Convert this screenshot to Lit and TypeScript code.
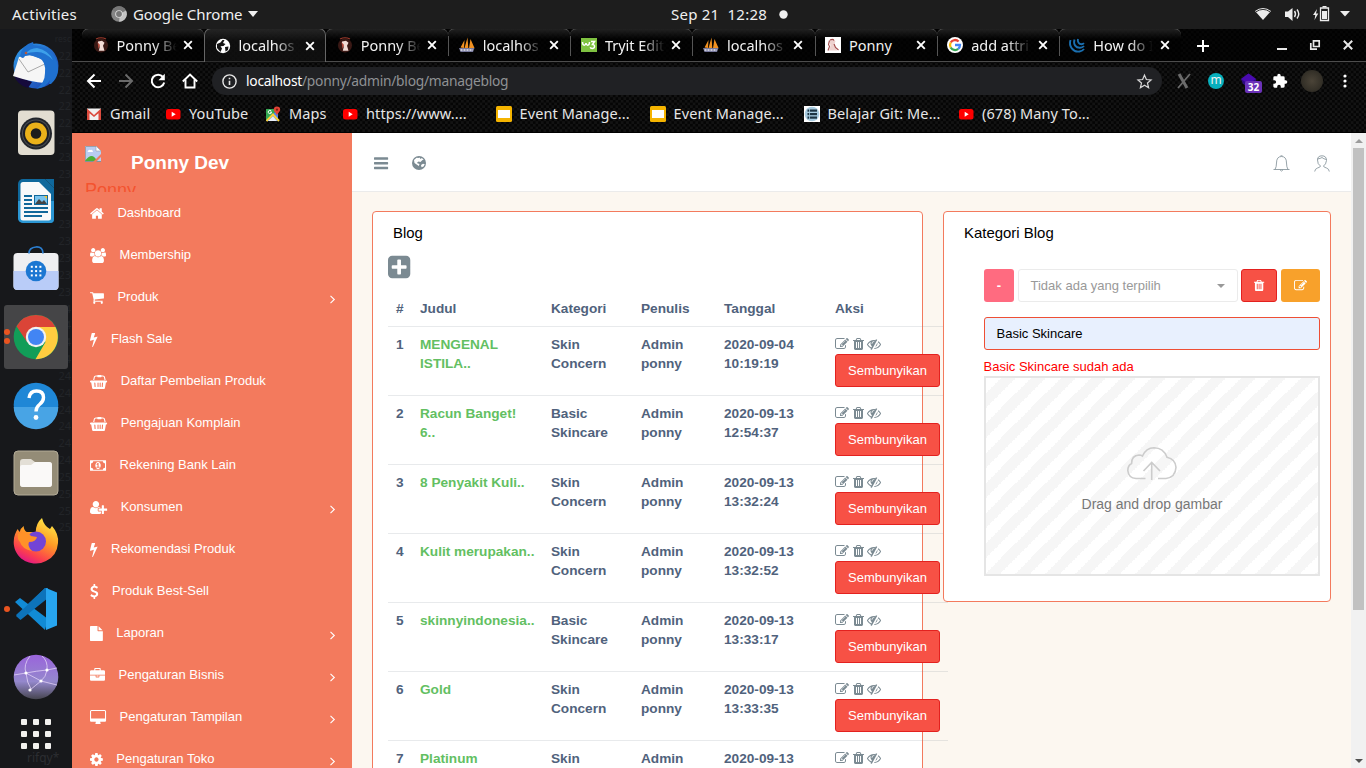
import { LitElement, html, css, svg, nothing } from "lit";

type Glyph = { w: number; d: string };

// Icon outlines on a 1792-unit square, centred horizontally; w is the advance width.
const GLYPHS: Record<string, Glyph> = {
  home: { w: 1664, d: "M1472 992v480q0 26-19 45t-45 19h-384v-384h-256v384h-384q-26 0-45-19t-19-45v-480q0-1 .5-3t.5-3l575-474 575 474q1 2 1 6zm223-69l-62 74q-8 9-21 11h-3q-13 0-21-7l-692-577-692 577q-12 8-24 7-13-2-21-11l-62-74q-8-10-7-23.5t11-21.5l719-599q32-26 76-26t76 26l244 204v-195q0-14 9-23t23-9h192q14 0 23 9t9 23v408l219 182q10 8 11 21.5t-7 23.5z" },
  cart: { w: 1664, d: "M704 1536q0 52-38 90t-90 38-90-38-38-90 38-90 90-38 90 38 38 90zm896 0q0 52-38 90t-90 38-90-38-38-90 38-90 90-38 90 38 38 90zm128-1088v512q0 24-16.5 42.5t-40.5 21.5l-1044 122q13 60 13 70 0 16-24 64h920q26 0 45 19t19 45-19 45-45 19h-1024q-26 0-45-19t-19-45q0-11 8-31.5t16-36 21.5-40 15.5-29.5l-177-823h-204q-26 0-45-19t-19-45 19-45 45-19h256q16 0 28.5 6.5t19.5 15.5 13 24.5 8 26 5.5 29.5 4.5 26h1201q26 0 45 19t19 45z" },
  bolt: { w: 896, d: "M1333 566q18 20 7 44l-540 1157q-13 25-42 25-4 0-14-2-17-5-25.5-19t-4.5-30l197-808-406 101q-4 1-12 1-18 0-31-11-18-15-13-39l201-825q4-14 16-23t28-9h328q19 0 32 12.5t13 29.5q0 8-5 18l-171 463 396-98q8-2 12-2 19 0 34 15z" },
  group: { w: 1920, d: "M529 896q-162 5-265 128h-134q-82 0-138-40.5t-56-118.5q0-353 124-353 6 0 43.5 21t97.5 42.5 119 21.5q67 0 133-23-5 37-5 66 0 139 81 256zm1071 637q0 120-73 189.5t-194 69.5h-874q-121 0-194-69.5t-73-189.5q0-53 3.500-103.500t14-109 26.500-108.500 43-97.500 62-81 85.500-53.500 111.500-20q10 0 43 21.500t73 48 107 48 135 21.500 135-21.500 107-48 73-48 43-21.500q61 0 111.500 20t85.500 53.500 62 81 43 97.500 26.500 108.500 14 109 3.500 103.500zm-1024-1277q0 106-75 181t-181 75-181-75-75-181 75-181 181-75 181 75 75 181zm704 384q0 159-112.500 271.500t-271.500 112.500-271.500-112.500-112.500-271.500 112.500-271.500 271.500-112.500 271.500 112.500 112.500 271.500zm576 225q0 78-56 118.500t-138 40.500h-134q-103-123-265-128 81-117 81-256 0-29-5-66 66 23 133 23 59 0 119-21.500t97.500-42.500 43.500-21q124 0 124 353zm-128-609q0 106-75 181t-181 75-181-75-75-181 75-181 181-75 181 75 75 181z" },
  basket: { w: 2048, d: "M1792 768q53 0 90.500 37.500t37.500 90.500-37.500 90.500-90.500 37.500h-15l-115 662q-8 46-44 76t-82 30h-1280q-46 0-82-30t-44-76l-115-662h-15q-53 0-90.500-37.500t-37.500-90.500 37.500-90.500 90.500-37.500h1792zm-1307 800q26-2 43.500-22.500t15.500-46.500l-32-416q-2-26-22.500-43.500t-46.500-15.500-43.500 22.500-15.500 46.500l32 416q2 25 20.500 42t43.500 17h5zm411-64v-416q0-26-19-45t-45-19-45 19-19 45v416q0 26 19 45t45 19 45-19 19-45zm256 0v-416q0-26-19-45t-45-19-45 19-19 45v416q0 26 19 45t45 19 45-19 19-45zm248 5l32-416q2-26-15.500-46.500t-43.500-22.500-46.500 15.500-22.500 43.500l-32 416q-2 26 15.500 46.500t43.500 22.500h5q25 0 43.500-17t20.500-42zm-952-1098l-93 412h-132l101-441q19-88 89-143.500t160-55.500h167q0-26 19-45t45-19h384q26 0 45 19t19 45h167q90 0 160 55.500t89 143.500l101 441h-132l-93-412q-11-44-45.500-72t-79.500-28h-167q0 26-19 45t-45 19h-384q-26 0-45-19t-19-45h-167q-45 0-79.500 28t-45.500 72z" },
  money: { w: 1920, d: "M704 1152h384v-96h-128v-448h-114l-148 137 77 80q42-37 55-57h2v288h-128v96zm512-256q0 70-21 142t-59.500 134-101.500 101-138 39-138-39-101.500-101-59.500-134-21-142 21-142 59.500-134 101.500-101 138-39 138 39 101.500 101 59.500 134 21 142zm512 256v-512q-106 0-181-75t-75-181h-1152q0 106-75 181t-181 75v512q106 0 181 75t75 181h1152q0-106 75-181t181-75zm128-832v1152q0 26-19 45t-45 19h-1792q-26 0-45-19t-19-45v-1152q0-26 19-45t45-19h1792q26 0 45 19t19 45z" },
  userplus: { w: 2048, d: "M576 896q-159 0-271.500-112.500t-112.500-271.500 112.500-271.500 271.500-112.500 271.500 112.500 112.500 271.500-112.500 271.500-271.500 112.500zm960 128h352q13 0 22.500 9.500t9.500 22.500v192q0 13-9.500 22.500t-22.500 9.500h-352v352q0 13-9.500 22.500t-22.500 9.500h-192q-13 0-22.500-9.500t-9.500-22.500v-352h-352q-13 0-22.500-9.500t-9.500-22.500v-192q0-13 9.500-22.500t22.500-9.500h352v-352q0-13 9.500-22.500t22.500-9.500h192q13 0 22.500 9.500t9.500 22.500v352zm-736 224q0 52 38 90t90 38h256v238q-68 50-171 50h-874q-121 0-194-69t-73-190q0-53 3.500-103.500t14-109 26.500-108.500 43-97.500 62-81 85.500-53.500 111.500-20q19 0 39 17 79 61 154.500 91.500t164.500 30.500 164.500-30.500 154.500-91.500q20-17 39-17 132 0 217 96h-223q-52 0-90 38t-38 90v192z" },
  dollar: { w: 1024, d: "M1362 1185q0 153-99.500 263.500t-258.500 136.500v175q0 14-9 23t-23 9h-135q-13 0-22.500-9.500t-9.500-22.500v-175q-66-9-127.500-31t-101.500-44.500-74-48-46.500-37.500-17.500-18q-17-21-2-41l103-135q7-10 23-12 15-2 24 9l2 2q113 99 243 125 37 8 74 8 81 0 142.500-43t61.500-122q0-28-15-53t-33.500-42-58.500-37.500-66-32-80-32.500q-39-16-61.500-25t-61.500-26.500-62.500-31-56.500-35.500-53.500-42.500-43.500-49-35.500-58-21-66.500-8.500-78q0-138 98-242t255-134v-180q0-13 9.500-22.500t22.500-9.500h135q14 0 23 9t9 23v176q57 6 110.500 23t87 33.500 63.500 37.500 39 29 15 14q17 18 5 38l-81 146q-8 15-23 16-14 3-27-7-3-3-14.500-12t-39-26.500-58.500-32-74.500-26-85.500-11.500q-95 0-155 43t-60 111q0 26 8.500 48t29.500 41.500 39.500 33 56 31 60.500 27 70 27.500q53 20 81 31.500t76 35 75.500 42.500 62 50 53 63.500 31.500 76.500 13 94z" },
  file: { w: 1536, d: "M1152 512v-472q22 14 36 28l408 408q14 14 28 36h-472zm-128 32q0 40 28 68t68 28h544v1056q0 40-28 68t-68 28h-1344q-40 0-68-28t-28-68v-1600q0-40 28-68t68-28h800v544z" },
  briefcase: { w: 1792, d: "M640 256h512v-128h-512v128zm1152 640v480q0 66-47 113t-113 47h-1472q-66 0-113-47t-47-113v-480h672v160q0 26 19 45t45 19h320q26 0 45-19t19-45v-160h672zm-768 0v128h-256v-128h256zm768-480v384h-1792v-384q0-66 47-113t113-47h352v-160q0-40 28-68t68-28h576q40 0 68 28t28 68v160h352q66 0 113 47t47 113z" },
  desktop: { w: 1920, d: "M1728 992v-832q0-13-9.500-22.500t-22.500-9.500h-1600q-13 0-22.500 9.500t-9.500 22.500v832q0 13 9.500 22.500t22.500 9.500h1600q13 0 22.500-9.500t9.500-22.500zm128-832v1088q0 66-47 113t-113 47h-544q0 37 16 77.500t32 71 16 43.500q0 26-19 45t-45 19h-512q-26 0-45-19t-19-45q0-14 16-44t32-70 16-78h-544q-66 0-113-47t-47-113v-1088q0-66 47-113t113-47h1600q66 0 113 47t47 113z" },
  gear: { w: 1536, d: "M1152 896q0-106-75-181t-181-75-181 75-75 181 75 181 181 75 181-75 75-181zm512-109v222q0 12-8 23t-20 13l-185 28q-19 54-39 91 35 50 107 138 10 12 10 25t-9 23q-27 37-99 108t-94 71q-12 0-26-9l-138-108q-44 23-91 38-16 136-29 186-7 28-36 28h-222q-14 0-24.5-8.5t-11.5-21.5l-28-184q-49-16-90-37l-141 107q-10 9-25 9-14 0-25-11-126-114-165-168-7-10-7-23 0-12 8-23 15-21 51-66.5t54-70.5q-27-50-41-99l-183-27q-13-2-21-12.5t-8-23.5v-222q0-12 8-23t19-13l186-28q14-46 39-92-40-57-107-138-10-12-10-24 0-10 9-23 26-36 98.5-107.5t94.5-71.5q13 0 26 10l138 107q44-23 91-38 16-136 29-186 7-28 36-28h222q14 0 24.5 8.5t11.5 21.5l28 184q49 16 90 37l142-107q9-9 24-9 13 0 25 10 129 119 165 170 7 8 7 22 0 12-8 23-15 21-51 66.5t-54 70.5q26 50 41 98l183 28q13 2 21 12.5t8 23.5z" },
  bars: { w: 1536, d: "M1664 1344v128q0 26-19 45t-45 19h-1408q-26 0-45-19t-19-45v-128q0-26 19-45t45-19h1408q26 0 45 19t19 45zm0-512v128q0 26-19 45t-45 19h-1408q-26 0-45-19t-19-45v-128q0-26 19-45t45-19h1408q26 0 45 19t19 45zm0-512v128q0 26-19 45t-45 19h-1408q-26 0-45-19t-19-45v-128q0-26 19-45t45-19h1408q26 0 45 19t19 45z" },
  plus: { w: 1536, d: "M1408 960v-128q0-26-19-45t-45-19h-320v-320q0-26-19-45t-45-19h-128q-26 0-45 19t-19 45v320h-320q-26 0-45 19t-19 45v128q0 26 19 45t45 19h320v320q0 26 19 45t45 19h128q26 0 45-19t19-45v-320h320q26 0 45-19t19-45zm256-544v960q0 119-84.5 203.5t-203.5 84.5h-960q-119 0-203.5-84.5t-84.5-203.5v-960q0-119 84.5-203.5t203.5-84.5h960q119 0 203.5 84.5t84.5 203.5z" },
  edit: { w: 1792, d: "M888 1184l116-116-152-152-116 116v56h96v96h56zm440-720q-16-16-33 1l-350 350q-17 17-1 33t33-1l350-350q17-17 1-33zm80 594v190q0 119-84.5 203.5t-203.5 84.5h-832q-119 0-203.5-84.5t-84.5-203.5v-832q0-119 84.5-203.5t203.5-84.5h832q63 0 117 25 15 7 18 23 3 17-9 29l-49 49q-14 14-32 8-23-6-45-6h-832q-66 0-113 47t-47 113v832q0 66 47 113t113 47h832q66 0 113-47t47-113v-126q0-13 9-22l64-64q15-15 35-7t20 29zm-96-738l288 288-672 672h-288v-288zm444 132l-92 92-288-288 92-92q28-28 68-28t68 28l152 152q28 28 28 68t-28 68z" },
  trash: { w: 1408, d: "M704 1376v-704q0-14-9-23t-23-9h-64q-14 0-23 9t-9 23v704q0 14 9 23t23 9h64q14 0 23-9t9-23zm256 0v-704q0-14-9-23t-23-9h-64q-14 0-23 9t-9 23v704q0 14 9 23t23 9h64q14 0 23-9t9-23zm256 0v-704q0-14-9-23t-23-9h-64q-14 0-23 9t-9 23v704q0 14 9 23t23 9h64q14 0 23-9t9-23zm-544-992h448l-48-117q-7-9-17-11h-317q-10 2-17 11zm928 32v64q0 14-9 23t-23 9h-96v948q0 83-47 143.5t-113 60.5h-832q-66 0-113-58.5t-47-141.5v-952h-96q-14 0-23-9t-9-23v-64q0-14 9-23t23-9h309l70-167q15-37 54-63t79-26h320q40 0 79 26t54 63l70 167h309q14 0 23 9t9 23z" },
  eyeslash: { w: 1792, d: "M555 1335l78-141q-87-63-136-159t-49-203q0-121 61-225-229 117-381 353 167 258 427 375zm389-759q0-20-14-34t-34-14q-125 0-214.500 89.500t-89.500 214.500q0 20 14 34t34 14 34-14 14-34q0-86 61-147t147-61q20 0 34-14t14-34zm363-191q0 7-1 9-106 189-316 567t-315 566l-49 89q-10 16-28 16-12 0-134-70-16-10-16-28 0-12 44-87-143-65-263.500-173t-208.500-245q-20-31-20-69t20-69q153-235 380-371t496-136q89 0 180 17l54-97q10-16 28-16 5 0 18 6t31 15.500 33 18.500 31.500 18.500 19.500 11.500q16 10 16 27zm37 447q0 139-79 253.500t-209 164.500l280-502q8 45 8 84zm448 128q0 35-20 69-39 64-109 145-150 172-347.500 267t-419.500 95l74-132q212-18 392.500-137t301.500-307q-115-179-282-294l63-112q95 64 182.500 153t144.500 184q20 34 20 69z" },
};

const fa = (name: string, size: number) => {
  const g = GLYPHS[name];
  const w = (g.w / 1792) * size;
  return html`<svg class="fa" width=${w.toFixed(2)} height=${size} viewBox="${(1792 - g.w) / 2} 0 ${g.w} 1792"><path fill="currentColor" fill-rule="evenodd" d=${g.d}/></svg>`;
};

const closeX = html`<svg class="x" width="10" height="10" viewBox="0 0 10 10"><path d="M1.200 1.200l7.600 7.600M8.800 1.200L1.200 8.800" stroke="#fff" stroke-width="1.900" fill="none"/></svg>`;

const FAV: Record<string, unknown> = {
  pony: svg`<circle cx="8" cy="8.500" r="7" fill="#3a1915"/><path d="M3 2q5-2.500 10 0" stroke="#9c3a2c" stroke-width="1.200" fill="none"/><path d="M5 4.500l4-.8 2.500 2-1.500 3 1.500 5H5.800l1-4L5 8z" fill="#f2dcd6"/><path d="M4.500 5l1 7 1.500-4z" fill="#b54a3c"/>`,
  earth: svg`<circle cx="8" cy="8" r="7.200" fill="#fff"/><path d="M2 6l3.500-1.500 2-2.500h2L8 5l2.500 1-2 2-3 .3L7 10.500 5.500 14 2 10zM10 9l3.500-.5L13 12l-2.500 1.500z" fill="#151515"/>`,
  pma: svg`<path d="M1.500 10.500L5.500 3 5 11zM5.500 11L8.500.5l.8 10.500zM10 11l1.500-9 4 9z" fill="#f19121"/><path d="M0 11h15.500l-1.500 4H1.500z" fill="#77799c"/><path d="M1.500 13h12.500" stroke="#e6e6ef" stroke-width="1.600" stroke-dasharray="2 1"/>`,
  w3: svg`<rect y="1" width="16" height="14" fill="#7fc241"/><path d="M1.500 5c0 4 3 4 3.500 1 .5 3 3.500 3 3.500-1M10 4.500h3.500L11.500 7.500c3 0 2.500 4-.3 4-1 0-1.800-.5-2-1.200" fill="none" stroke="#fff" stroke-width="1.500"/>`,
  ponyw: svg`<rect width="16" height="16" fill="#fff"/><path d="M4.500 3l4-.8 2 2-1 2.500 2.500 6.800H4l1.500-4.500z" fill="#eed2cf"/><path d="M4.500 3.500l-1 4 1 2-1.500 4M5 3q3-1.500 4 .5M9 7l1.500 3.500 3 2.500" fill="none" stroke="#a24a4a" stroke-width="1.100"/>`,
  google: svg`<circle cx="8" cy="8" r="8" fill="#fff"/><g fill="none" stroke-width="2.300"><path d="M11.600 4.500A5 5 0 0 0 3.700 5.500" stroke="#ea4335"/><path d="M3.700 5.500a5 5 0 0 0 0 5" stroke="#fbbc05"/><path d="M3.700 10.500a5 5 0 0 0 7.500 1.400" stroke="#34a853"/><path d="M11.200 11.900A5 5 0 0 0 13 8H8" stroke="#4285f4"/></g>`,
  jquery: svg`<g fill="none" stroke="#1a6fb0" stroke-width="1.900"><path d="M1.500 3C-.5 9 4 15.500 10.500 14.500q3-.5 4.500-2.500"/><path d="M5.500 2.500C4 7.500 7 11 11 10.800q2.500 0 4-1.800"/><path d="M9 2c-.8 3 1 5.200 3.500 5.200q1.500 0 2.500-1"/></g>`,
  gmail: svg`<rect x="1" y="2.500" width="14" height="11.500" fill="#f1f1f1"/><path d="M1 14V2.500L8 9l7-6.500V14h-2.500V7.200L8 11 3.500 7.200V14z" fill="#dc4b3e"/>`,
  yt: svg`<rect x="1" y="3" width="14.500" height="10.500" rx="2.500" fill="#f00"/><path d="M6.700 5.800v5l4-2.500z" fill="#fff"/>`,
  maps: svg`<path d="M1 3h12v12H1z" fill="#34a853"/><path d="M1 15L13 3.500V15z" fill="#4a87f5"/><path d="M1.500 15L8 8.500l6 6.500" fill="none" stroke="#fbd03b" stroke-width="2"/><path d="M3 15l5-4.800L12 15z" fill="#e8eef9"/><path d="M12 .5a3.200 3.200 0 0 1 3.200 3.200c0 2-2.500 3-3.200 6-.7-3-3.200-4-3.200-6A3.200 3.200 0 0 1 12 .5z" fill="#e14234"/><circle cx="12" cy="3.700" r="1.100" fill="#7a1d15"/><path d="M6.300 5a1.700 1.700 0 1 0 .3 1.200H5" fill="none" stroke="#fff"/>`,
  slides: svg`<rect width="16" height="16" rx="1.500" fill="#f5b400"/><rect x="2" y="4" width="12" height="8" fill="#fff"/>`,
  git: svg`<rect width="16" height="16" fill="#fff"/><circle cx="8" cy="8" r="7.300" fill="#a7cbe0"/><g fill="#1d3443"><rect x="3.500" y="3.500" width="9.500" height="2.200"/><rect x="3.500" y="7" width="9.500" height="2.200"/><rect x="3.500" y="10.500" width="9.500" height="2.200"/></g><path d="M5.500 3v10" stroke="#a7cbe0" stroke-width=".8"/>`,
};
const fav = (n: string) => html`<svg class="fav" width="16" height="16" viewBox="0 0 16 16">${FAV[n]}</svg>`;

const TABS: [string, string][] = [
  ["pony", "Ponny Be"], ["earth", "localhos"], ["pony", "Ponny Be"], ["pma", "localhos"],
  ["w3", "Tryit Edit"], ["pma", "localhos"], ["ponyw", "Ponny"], ["google", "add attri"], ["jquery", "How do I"],
];
const BOOKMARKS: [string, string, number][] = [
  ["gmail", "Gmail", 79], ["yt", "YouTube", 100], ["maps", "Maps", 77], ["yt", "https://www....", 153.5],
  ["slides", "Event Manage...", 154], ["slides", "Event Manage...", 154], ["git", "Belajar Git: Me...", 154.5], ["yt", "(678) Many To...", 150],
];
const MENU: [string, string, boolean][] = [
  ["home", "Dashboard", false], ["group", "Membership", false], ["cart", "Produk", true], ["bolt", "Flash Sale", false],
  ["basket", "Daftar Pembelian Produk", false], ["basket", "Pengajuan Komplain", false], ["money", "Rekening Bank Lain", false],
  ["userplus", "Konsumen", true], ["bolt", "Rekomendasi Produk", false], ["dollar", "Produk Best-Sell", false], ["file", "Laporan", true],
  ["briefcase", "Pengaturan Bisnis", true], ["desktop", "Pengaturan Tampilan", true], ["gear", "Pengaturan Toko", true],
];
const ROWS: string[][] = [
  ["1", "MENGENAL\nISTILA..", "Skin\nConcern", "2020-09-04\n10:19:19"],
  ["2", "Racun Banget!\n6..", "Basic\nSkincare", "2020-09-13\n12:54:37"],
  ["3", "8 Penyakit Kuli..", "Skin\nConcern", "2020-09-13\n13:32:24"],
  ["4", "Kulit merupakan..", "Skin\nConcern", "2020-09-13\n13:32:52"],
  ["5", "skinnyindonesia..", "Basic\nSkincare", "2020-09-13\n13:33:17"],
  ["6", "Gold", "Skin\nConcern", "2020-09-13\n13:33:35"],
  ["7", "Platinum", "Skin", "2020-09-13"],
];

const DOCK: unknown[] = [
  // mail
  svg`<defs><linearGradient id="tb" x1="0" y1="0" x2="1" y2="1"><stop offset="0" stop-color="#2f9be8"/><stop offset="1" stop-color="#1c3fae"/></linearGradient></defs>
    <circle cx="24" cy="25" r="22.500" fill="url(#tb)"/><path d="M2 34q3 10 14 13l4-6z" fill="#150a3c"/><path d="M1 35L7 16l11-2 17 6-2 22q-14-1-32-7z" fill="#f6f6f6"/><path d="M7 18l9 13 19-9" fill="none" stroke="#aaa" stroke-width="1"/><path d="M8 15Q10 4 21 1q1 2 0 3 16 1 23 14 6 15-5 25l-2 0 1-4q-3 7-14 9 9-6 9-16 1-12-6-15-8-4-14-2-2 4-5 0z" fill="#1f70cf"/><path d="M13 13q5-6 12-6 11 2 16 12-9-9-17-8-6 0-11 2z" fill="#3da0ea"/><circle cx="14" cy="12" r="1.300" fill="#bb5a3a"/>`,
  // music player
  svg`<rect x="6" y="1.500" width="36.500" height="44.500" rx="4" fill="#e2ddd1"/><circle cx="24" cy="24.500" r="16" fill="#22252b"/><circle cx="24" cy="24.500" r="14" fill="#4a4d52"/><circle cx="24" cy="24.500" r="13" fill="#1d1f24"/><circle cx="24" cy="24.500" r="11" fill="#eab11a"/><circle cx="24" cy="24.500" r="5.300" fill="#1c1c1c"/>`,
  // writer
  svg`<path d="M11 2h22l9 9v31a4 4 0 0 1-4 4H11a5 5 0 0 1-5-5V7a5 5 0 0 1 5-5z" fill="#0f689c"/><path d="M6 24h36v18a4 4 0 0 1-4 4H11a5 5 0 0 1-5-5z" fill="#2b96d3"/><path d="M11 5h16l12 12v24a2.500 2.500 0 0 1-2.500 2.500H11A2.500 2.500 0 0 1 8.500 41V7.500A2.500 2.500 0 0 1 11 5z" fill="#f8f9fa"/><path d="M33 2h9v9z" fill="#0f689c"/><path d="M12 19h8M12 23h8M12 27h8M12 31h24M12 35h24M12 39h18" stroke="#11689b" stroke-width="1.800"/><rect x="22.500" y="18.500" width="13" height="9" fill="#78c3ee" stroke="#11689b"/><path d="M23 27l4-5 3 3 2-2 3 4z" fill="#444"/><path d="M32 19h3v3z" fill="#f4c22c"/>`,
  // software store
  svg`<rect x="1.500" y="8" width="45" height="37" rx="4" fill="#efeff1"/><path d="M1.500 26h45v15a4 4 0 0 1-4 4h-37a4 4 0 0 1-4-4z" fill="#b9ccf8"/><path d="M17 8.500q0-6 7-6.500t7 6.500" fill="none" stroke="#2b7ed0" stroke-width="1.700"/><circle cx="24" cy="26" r="10.300" fill="#1c77d2"/><g fill="#fff">${[0, 1, 2].map(i => [0, 1, 2].map(j => svg`<rect x=${18.8 + i * 4.300} y=${20.800 + j * 4.300} width="2" height="2"/>`))}</g>`,
  // browser
  svg`<circle cx="24" cy="24" r="22.300" fill="#119d58"/><path d="M4.500 13.200L15 29 24 14H43.500A22.300 22.300 0 0 0 4.500 13.200z" fill="#db4437"/><path d="M43.500 14A22.300 22.300 0 0 1 23.500 46.300L33.500 29 24 14z" fill="#ffcd40"/><circle cx="24" cy="24" r="10.200" fill="#f1f1f1"/><circle cx="24" cy="24" r="8" fill="#4285f4"/>`,
  // help
  svg`<circle cx="24" cy="24" r="22.300" fill="#1f87d6"/><path d="M1.700 26h44.600a22.300 22.300 0 0 1-44.600 0z" fill="#48a4e5"/><path d="M17 17q1-7 7.500-7 7 0 7 6.500 0 4-4 7-3.500 2.700-3.500 7" fill="none" stroke="#fff" stroke-width="3.400"/><circle cx="24" cy="36.500" r="2.400" fill="#fff"/>`,
  // files
  svg`<rect x="2" y="2" width="44" height="44" rx="4" fill="#948c77" stroke="#b3ab98"/><path d="M8 13a3 3 0 0 1 3-3h8l4 3h14a3 3 0 0 1 3 3v19a3 3 0 0 1-3 3H11a3 3 0 0 1-3-3z" fill="#e3dfd6"/><path d="M8 18q0-2 2-2h9l4-3h14a3 3 0 0 1 3 3v19a3 3 0 0 1-3 3H11a3 3 0 0 1-3-3z" fill="#faf9f8"/>`,
  // firefox
  svg`<defs><linearGradient id="ff" x1=".8" y1="0" x2=".3" y2="1"><stop offset="0" stop-color="#fff04a"/><stop offset=".45" stop-color="#ff9a25"/><stop offset=".8" stop-color="#fb3f4e"/><stop offset="1" stop-color="#e0158a"/></linearGradient></defs><path d="M24 46.500C11 46.500 1.700 37 1.700 25c0-6 2-10 4-13q1 2 2 3 1-4 4-6 0 4 3 6l9 0Q24 6 30 1q2 8 8 11l2-3q7 8 6 17-1 13-12 18-5 2.500-10 2.500z" fill="url(#ff)"/><circle cx="24" cy="24.500" r="10" fill="#7344d6"/><path d="M6 17q8-5 13 2l6 1q-1 5-8 5-2 4 3 9-10-2-12-9-3-3-2-8z" fill="#ff9128"/>`,
  // code editor
  svg`<path d="M33 3L4 30l4.500 4L35 13z" fill="#0b6fb5"/><path d="M3 17l5-4 28 21-3 11z" fill="#118bd6"/><path d="M4 31l4.500 4L36 13V3h-3z" fill="#0d73ba"/><path d="M34 3l11 4.500v33L34 45z" fill="#27a5ef"/>`,
  // network globe
  svg`<defs><linearGradient id="gl" x1="0" y1="0" x2="0" y2="1"><stop offset="0" stop-color="#9a64dc"/><stop offset=".6" stop-color="#9488cc"/><stop offset="1" stop-color="#46454f"/></linearGradient></defs><circle cx="24" cy="24" r="22.300" fill="url(#gl)"/><path d="M18 3Q11 12 14 20q1 10 5 16M14 20Q24 18 35 17M35 17q-1 7-6 11t-11 9M14 20l15 8 16 4M35 17Q36 8 30 3M2 22l12-2M35 17l10-2" fill="none" stroke="#d9c8f2" stroke-width=".9"/><g fill="#fff"><circle cx="14" cy="20" r="1.600"/><circle cx="35" cy="17" r="1.600"/><circle cx="29" cy="28" r="1.600"/><circle cx="18" cy="37" r="1.600"/></g>`,
];

// Line numbers of the editor behind the translucent dock.
const LINES: string[] = [...Array(5).fill("22"), ...Array(10).fill("23"), ...Array(10).fill("24"), ...Array(4).fill("25")];

class AppRoot extends LitElement {
  static styles = css`
    :host { display: block; width: 1366px; height: 768px; overflow: hidden; font-family: "Liberation Sans", Arial, sans-serif; font-size: 13px; }
    * { box-sizing: border-box; }
    svg { display: block; flex: none; overflow: visible; }
    .screen { display: grid; grid-template: 28px 740px / 72px 1294px; width: 1366px; height: 768px; background: #1b1c1f; }
    .top { grid-column: 1 / 3; display: grid; grid-template-columns: 659px auto 1fr; align-items: center; background: #1d1d1d; color: #f0f0f0; padding: 0 16px 0 12px; font: 15px "Noto Sans", sans-serif; height: 29px; z-index: 1; }
    .top .left, .top .right, .top .mid { display: flex; align-items: center; margin-top: -1px; }
    .app { display: flex; align-items: center; gap: 6px; margin-left: 34px; }
    .t1 { letter-spacing: .25px; }
    .t2 { letter-spacing: -.1px; }
    .mid { gap: 12px; white-space: pre; letter-spacing: .22px; }
    .right { justify-content: flex-end; }
    .dock { display: flex; flex-direction: column; padding-top: 3px; position: relative; overflow: hidden; background: #17181b; }
    .ghost { position: absolute; right: 1px; top: 2px; font: 11px/16.85px "Noto Sans", sans-serif; color: #222428; white-space: pre; text-align: right; }
    .ghost b { font-weight: 400; font-size: 8.500px; }
    .branch { position: absolute; left: 27px; top: 721px; font: 12px "Noto Sans", sans-serif; color: #2c2e32; }
    .di { height: 68px; display: flex; align-items: center; justify-content: center; position: relative; top: -.5px; flex: none; }
    .di.on::before { content: ""; position: absolute; left: 4px; top: 2.500px; width: 64px; height: 64px; border-radius: 3px; background: #454547; }
    .di svg { position: relative; }
    .dots { position: absolute; left: 4px; top: 0; height: 68px; display: flex; flex-direction: column; justify-content: center; gap: 3px; }
    .dots i { width: 6px; height: 6px; border-radius: 50%; background: #e95420; }
    .apps { display: grid; grid-template-columns: repeat(3, 6px); gap: 6px; margin: 8px 0 0 21px; position: relative; }
    .apps i { height: 6px; background: #f2f1ef; border-radius: 1px; }
    .win { display: flex; flex-direction: column; min-width: 0; }
    .chrome { height: 105px; background-color: #0b0b0b; background-image: conic-gradient(#131313 25%, #050505 0 50%, #131313 0 75%, #050505 0); background-size: 5.330px 5.330px; border-bottom: 1px solid #000; font-family: "Noto Sans", sans-serif; color: #f2f2f2; }
    .tabs { display: flex; height: 34px; padding-left: 10px; align-items: stretch; border-bottom: 1px solid #4d4d4d; background: rgba(0,0,0,.65); }
    .tab { width: 122.100px; flex: none; display: flex; align-items: center; padding: 0 0 0 10.500px; position: relative; border-top: 1px solid #555; border-radius: 7px 7px 0 0; background: linear-gradient(rgba(40,40,40,.8), rgba(0,0,0,.35) 10px); }
    .tab.sep::before { content: ""; position: absolute; left: 0; top: 7px; width: 1px; height: 20px; background: #555; }
    .tab.active { border: 1px solid #666; border-bottom: none; height: 34px; background: linear-gradient(rgba(40,40,40,.9), rgba(22,22,22,.6) 12px); padding-left: 9.500px; }
    .name { width: 61px; margin: -1px 0 0 8px; overflow: hidden; white-space: nowrap; font-size: 14.500px; letter-spacing: -.02px; -webkit-mask-image: linear-gradient(90deg, #000 60%, transparent 98%); mask-image: linear-gradient(90deg, #000 60%, transparent 98%); }
    .name.full { -webkit-mask-image: none; mask-image: none; }
    .tab .x { margin-left: 5.500px; }
    .newtab { margin: 12px 0 0 16px; }
    .winbtn { display: flex; align-items: center; margin-left: auto; padding-right: 13px; gap: 23px; }
    .bar { display: flex; align-items: center; height: 38px; padding: 0 12px 0 14px; }
    .nav { display: flex; gap: 16px; }
    .url { display: flex; align-items: center; width: 950px; height: 28px; margin-left: 14px; padding: 0 10px 0 10px; border-radius: 14px; background: #202124; font-size: 13.800px; color: #8f9194; }
    .url b { font-weight: 400; color: #fff; }
    .url span { margin: -2px 0 0 9px; flex: 1; letter-spacing: -.26px; }
    .ext { display: flex; align-items: center; flex: 1; padding-left: 14px; }
    .badge { position: absolute; left: 5px; top: 8px; width: 17px; height: 12px; border-radius: 2px; background: #6b32b8; color: #fff; font: bold 10px/12px "Noto Sans", sans-serif; text-align: center; }
    .hex { position: relative; margin-left: 16px; width: 17px; height: 16px; }
    .mext { width: 16px; height: 16px; border-radius: 50%; background: #07b0bd; font: 12px/13px "Noto Sans", sans-serif; text-align: center; margin-left: 16px; }
    .puzzle { margin-left: 15px; }
    .avatar { width: 22px; height: 22px; border-radius: 50%; background: radial-gradient(#4b4438, #26241e); margin-left: 13px; }
    .more { margin-left: 20px; }
    .marks { display: flex; align-items: center; height: 28px; padding-left: 14px; }
    .mark { display: flex; align-items: center; gap: 8px; flex: none; font-size: 14.500px; white-space: nowrap; color: #e6e6e6; letter-spacing: .1px; }
    .mark span { margin-top: -2px; }
    .page { display: flex; height: 635px; overflow: hidden; background: #fcf7f0; }
    .side { width: 280px; background: #f37a5d; color: #fff; flex: none; }
    .brand { display: flex; height: 59px; padding: 13px 0 0 13px; overflow: hidden; }
    .alt { width: 46px; color: #f4532f; font-size: 18px; line-height: 20px; }
    .alt span { display: block; margin-top: 18px; height: 12px; width: 60px; }
    .brand h1 { margin: 7px 0 0; font-size: 19px; line-height: 20px; }
    .item { display: flex; align-items: center; height: 42px; padding: 0 16px 0 18px; gap: 13.500px; color: #fff; }
    .item span { margin-top: -2px; }
    .item .fa { margin-top: 1px; }
    .item .arr { margin: 4px 0 0 auto; }
    .main { width: 999px; flex: none; }
    .head { display: flex; align-items: center; height: 59px; background: #fff; border-bottom: 1px solid #ebebeb; color: #7b8a92; padding: 2px 21.500px 0 22px; }
    .head .r { display: flex; gap: 24px; margin-left: auto; }
    .globe { margin-left: 24px; }
    .cards { display: flex; align-items: flex-start; gap: 20px; padding: 19px 20px 0; }
    .card { background: #fff; border: 1px solid #f37a5d; border-radius: 4px; }
    .blog { width: 551px; height: 620px; padding: 11px 15px; }
    .kat { width: 388px; height: 391px; padding: 11px 10px 0 40px; z-index: 1; }
    .title { line-height: 20px; color: #000; margin: 0; font-weight: 400; }
    .blog .title { margin-left: 5px; font-size: 14.950px; }
    .kat .title { margin-left: -20px; font-size: 14.950px; }
    .add { margin-top: 11px; color: #7b8a92; }
    .row { display: grid; grid-template-columns: 24px 131px 90px 83px 111px 121px; width: 560px; height: 69px; border-bottom: 1px solid rgba(120,130,140,.17); font-size: 13.650px; font-weight: 700; color: #50627c; line-height: 19px; white-space: pre; }
    .row > div { padding: 8px 8px 0; }
    .row .n { padding-right: 0; }
    .hrow { height: 36px; margin-top: 11px; }
    .green { color: #63bf62; }
    .icons { display: flex; gap: 3.500px; height: 19px; align-items: center; color: #7b8a92; padding-bottom: 1px; }
    .btn { width: 105px; height: 33px; display: flex; align-items: center; justify-content: center; background: #f75145; border: 1px solid #e3211f; border-radius: 3px; color: #fff; font-weight: 400; font-size: 13px; }
    .pick { display: flex; margin-top: 26px; height: 33px; }
    .pick > div { display: flex; align-items: center; justify-content: center; border-radius: 3px; color: #fff; }
    .pick .m { width: 30px; background: #ff6b80; font-weight: 700; }
    .pick .s { width: 220px; margin: 0 3px 0 4px; border: 1px solid #ebebeb; color: #999; justify-content: space-between; padding: 0 12px 0 11.500px; }
    .pick .d { width: 36px; background: #f75145; border: 1px solid #e3211f; }
    .pick .e { width: 39px; margin-left: 4px; background: #f8a12b; }
    .tri { width: 0; border: 4px solid transparent; border-top-color: #999; border-bottom: 0; }
    .field { display: flex; align-items: center; height: 33px; margin-top: 15px; padding: 0 11.500px; border: 1px solid #ee4f35; border-radius: 3px; background: #e8f0fe; color: #000; }
    .err { color: #f00; height: 26px; line-height: 33px; margin-left: -.5px; }
    .drop { display: flex; flex-direction: column; align-items: center; height: 200px; border: 2px solid #e5e5e5; padding-top: 69px; color: #777; font-size: 14px; background: linear-gradient(-45deg, #f6f6f6 25%, transparent 25% 50%, #f6f6f6 50% 75%, transparent 75%) 0 0 / 30px 30px #fff; }
    .drop span { margin-top: 15px; line-height: 18px; }
    .scroll { width: 15px; display: flex; flex-direction: column; align-items: center; background: #f1f1f1; padding: 6px 0 5px; }
    .thumb { width: 11px; height: 462px; margin-top: 5px; background: #c1c1c1; }
    .up { width: 0; border: 4px solid transparent; border-top: 0; border-bottom-color: #9c9c9c; }
    .dn { width: 0; border: 4px solid transparent; border-bottom: 0; border-top-color: #505050; margin-top: auto; }
  `;

  render() {
    return html`<div class="screen">
      <div class="top">
        <div class="left"><span class="t1">Activities</span>
          <div class="app"><svg width="16" height="16" viewBox="0 0 16 16"><circle cx="8" cy="8" r="7.800" fill="#858585"/><path d="M8 8L1.500 4A7.800 7.800 0 0 1 14.700 4z" fill="#777"/><path d="M9 8l6-3.500A7.800 7.800 0 0 1 8 15.800z" fill="#c4c4c4"/><circle cx="8" cy="8" r="3.800" fill="#ddd"/><circle cx="8" cy="8" r="2.900" fill="#777"/></svg><span class="t2">Google Chrome</span><svg width="10" height="6" viewBox="0 0 10 6"><path d="M0 0h10L5 6z" fill="#f0f0f0"/></svg></div></div>
        <div class="mid"><span>Sep 21  12:28</span><svg width="9" height="9" viewBox="0 0 9 9"><circle cx="4.500" cy="4.500" r="4.200" fill="#f0f0f0"/></svg></div>
        <div class="right"><svg width="86" height="18" viewBox="0 0 86 18" fill="#ededed">
          <path d="M1 6Q9 0 17 6L9 15z"/><path d="M2 6.800Q9 2 16 6.800" fill="none" stroke="#1d1d1d" stroke-width=".9"/>
          <path d="M31 6.500h3L38.500 3v13l-4.500-4H31z"/><path d="M40.500 6q2 3 0 6M43 4.500q3.500 4.500 0 9" fill="none" stroke="#ededed" stroke-width="1.400"/>
          <path d="M63 4L59 10h2.300l-.8 5 3.800-6.500H62z"/><path d="M66.500 3h8v12.500h-8z" fill="none" stroke="#ededed" stroke-width="1.300"/><path d="M68.500 1h4v1.500h-4zM68 6h5v8h-5z"/></svg><svg width="10" height="6" viewBox="0 0 10 6"><path d="M0 0h10L5 5.500z" fill="#ededed"/></svg></div>
      </div>
      <div class="dock">
        <div class="ghost"><b>resc</b>${LINES.map((t) => `\n${t}`)}</div>
        <div class="branch">rifqy*</div>
        ${DOCK.map((d, i) => html`<div class="di ${i === 4 ? "on" : ""}">
          ${i === 4 ? html`<div class="dots"><i></i><i></i></div>` : i === 8 ? html`<div class="dots"><i></i></div>` : nothing}
          <svg width="48" height="48" viewBox="0 0 48 48">${d}</svg></div>`)}
        <div class="apps">${Array.from({ length: 9 }, () => html`<i></i>`)}</div>
      </div>
      <div class="win">
        <div class="chrome">
          <div class="tabs">
            ${TABS.map(([f, t], i) => html`<div class="tab ${i === 1 ? "active" : ""} ${i > 2 ? "sep" : ""}">${fav(f)}<div class="name ${t === "Ponny" ? "full" : ""}">${t}</div>${closeX}</div>`)}
            <svg class="newtab" width="12" height="12" viewBox="0 0 12 12"><path d="M6 0v12M0 6h12" stroke="#fff" stroke-width="2"/></svg>
            <div class="winbtn">
              <svg width="10" height="10" viewBox="0 0 10 10"><path d="M0 9h10" stroke="#e8e8e8" stroke-width="2"/></svg>
              <svg width="10" height="10" viewBox="0 0 10 10" fill="none" stroke="#e8e8e8" stroke-width="1.700"><path d="M3.500.8h5.700v5.700H3.500z"/><path d="M.8 3v6.200h6.200"/></svg>
              <svg width="10" height="10" viewBox="0 0 10 10"><path d="M.8.8l8.400 8.400M9.200.8L.8 9.200" stroke="#e8e8e8" stroke-width="2"/></svg>
            </div>
          </div>
          <div class="bar">
            <div class="nav">
              <svg width="16" height="16" viewBox="0 0 16 16" fill="none" stroke="#fff" stroke-width="2"><path d="M15 8H2.500M8.500 1.500L2 8l6.500 6.500"/></svg>
              <svg width="16" height="16" viewBox="0 0 16 16" fill="none" stroke="#6a6a6a" stroke-width="2"><path d="M1 8h12.500M7.500 1.500L14 8l-6.500 6.500"/></svg>
              <svg width="16" height="16" viewBox="0 0 16 16" fill="none" stroke="#fff" stroke-width="2"><path d="M13 4A6.300 6.300 0 1 0 14.200 9.500"/><path d="M14.800.8v6.400H8.500z" fill="#fff" stroke="none"/></svg>
              <svg width="16" height="16" viewBox="0 0 16 16" fill="none" stroke="#fff" stroke-width="1.900"><path d="M.8 8.500L8 1.500l7.200 7"/><path d="M3.500 6.500v8h9v-8"/></svg>
            </div>
            <div class="url"><svg width="15" height="15" viewBox="0 0 15 15" fill="none" stroke="#e8e8e8" stroke-width="1.400"><circle cx="7.500" cy="7.500" r="6.600"/><path d="M7.500 6.700v4.300M7.500 3.800v1.500" stroke-width="1.600"/></svg>
              <span><b>localhost</b>/ponny/admin/blog/manageblog</span>
              <svg width="15" height="15" viewBox="0 0 24 24" fill="none" stroke="#d8d8d8" stroke-width="2"><path d="M12 1.800l3 7 7.500.7-5.700 5 1.700 7.400L12 18l-6.500 3.900 1.700-7.400-5.700-5 7.500-.7z"/></svg></div>
            <div class="ext">
              <svg width="16" height="16" viewBox="0 0 16 16" fill="none" stroke="#6c6c6c"><path d="M3 1l8 14" stroke-width="3"/><path d="M14 1L2 15" stroke-width="1.800"/></svg>
              <div class="mext">m</div>
              <div class="hex"><svg width="17" height="14" viewBox="0 0 17 14"><path d="M1 6L8.500.5 16 6v5l-7.500 3L3 11z" fill="#2d0a80"/><path d="M1 6L8.500.5 16 6l-7.500 5z" fill="#4a0bb0"/></svg><div class="badge">32</div></div>
              <svg class="puzzle" width="16" height="16" viewBox="0 0 24 24" fill="#fff"><path d="M20.500 11H19V7a2 2 0 0 0-2-2h-4V3.500a2.500 2.500 0 0 0-5 0V5H4a2 2 0 0 0-2 2v3.800h1.500a2.700 2.700 0 0 1 0 5.400H2V20c0 1.100.9 2 2 2h3.800v-1.500a2.700 2.700 0 0 1 5.400 0V22H17a2 2 0 0 0 2-2v-4h1.500a2.500 2.500 0 0 0 0-5z"/></svg>
              <div class="avatar"></div>
              <svg class="more" width="4" height="14" viewBox="0 0 4 14" fill="#fff"><circle cx="2" cy="2" r="1.600"/><circle cx="2" cy="7" r="1.600"/><circle cx="2" cy="12" r="1.600"/></svg>
            </div>
          </div>
          <div class="marks">${BOOKMARKS.map(([f, t, w]) => html`<div class="mark" style="width:${w}px">${fav(f)}<span>${t}</span></div>`)}</div>
        </div>
        <div class="page">
          <div class="side">
            <div class="brand"><div class="alt"><svg width="16" height="16" viewBox="0 0 16 16"><path d="M0 0h11l5 5v11H0z" fill="#b9cdf1"/><path d="M.5 15.500V.5h10.500l4.500 4.500" fill="none" stroke="#98a2ad"/><path d="M11 0v5h5z" fill="#fff" stroke="#98a2ad" stroke-width=".6"/><path d="M2.500 6q1-3 3-2 2-1 2.500 2z" fill="#fff"/><path d="M0 15q7-10 12 0z" fill="#4caf36"/><path d="M0 15.500h16" stroke="#84909b"/><path d="M8 16l8-8v3l-5 5z" fill="#f37a5d"/></svg><span>Ponny</span></div><h1>Ponny Dev</h1></div>
            ${MENU.map(([ic, t, a]) => html`<div class="item">${fa(ic, 15)}<span>${t}</span>${a ? html`<svg class="arr" width="7" height="9" viewBox="0 0 7 9"><path d="M1.500.8l3.800 3.700-3.800 3.700" fill="none" stroke="#fff" stroke-width="1.100"/></svg>` : nothing}</div>`)}
          </div>
          <div class="main">
            <div class="head">${fa("bars", 16.5)}
              <svg class="globe" width="14" height="14" viewBox="0 0 14 14"><circle cx="7" cy="7" r="7" fill="#7b8a92"/><path d="M2 4L4.500 1.700l2 .3 1-.5 1.200 1.500 1-1 2 1.500-1.500.7L8.500 6l-2-.5L4.800 7 7.500 8 6.800 10 5 8.800 2.500 7zM9 9l2-1.200 1.800.5-1.300 2.200-2 .8z" fill="#fff"/></svg>
              <div class="r"><svg width="17" height="17" viewBox="0 0 17 17" fill="none" stroke="#84929a" stroke-width=".85"><path d="M.5 14.500h16M2 14.500Q3.500 12 3.500 8q0-6.500 5-6.500t5 6.500q0 4 1.500 6.500M7 14.800q1.500 2.500 3 0M7.500.8h2"/></svg>
              <svg width="16" height="17" viewBox="0 0 16 17" fill="none" stroke="#84929a" stroke-width=".85"><path d="M3.500 5Q3.500.8 8 .8t4.500 4.700Q12 9.500 9.500 11q0 1.200 3 2 2.500.8 2.800 3.500M3.500 5q0 4.500 3 6 0 1.200-3 2Q1 13.800.7 16.500M3.500 4q3-.5 4.500-1.500 1.500 1.500 4.500 2"/></svg></div></div>
            <div class="cards">
              <div class="card blog"><h2 class="title">Blog</h2>
                <div class="add">${fa("plus", 26)}</div>
                <div class="row hrow"><div class="n">#</div><div>Judul</div><div>Kategori</div><div>Penulis</div><div>Tanggal</div><div>Aksi</div></div>
                ${ROWS.map(([n, j, k, d]) => html`<div class="row"><div class="n">${n}</div><div class="green">${j}</div><div>${k}</div><div>${n === "7" ? "Admin" : "Admin\nponny"}</div><div>${d}</div><div><div class="icons">${fa("edit", 14)}${fa("trash", 14)}${fa("eyeslash", 14)}</div>${n === "7" ? nothing : html`<div class="btn">Sembunyikan</div>`}</div></div>`)}
              </div>
              <div class="card kat"><h2 class="title">Kategori Blog</h2>
                <div class="pick"><div class="m">-</div><div class="s">Tidak ada yang terpilih<i class="tri"></i></div><div class="d">${fa("trash", 13)}</div><div class="e">${fa("edit", 13)}</div></div>
                <div class="field">Basic Skincare</div>
                <div class="err">Basic Skincare sudah ada</div>
                <div class="drop"><svg width="50" height="33" viewBox="0 0 50 33" fill="none" stroke="#ccc" stroke-width="1.600"><path d="M18.500 31.500H9q-7.500-.5-8.200-8 0-5 3.800-7Q4.500 8.500 12 8q2 0 3.500 1Q19 1 27 .8q9.500 0 13 9.500 8.500 2 9 10-.5 10-10 11.200h-8"/><path d="M24.700 33V15.500M16.500 24l8.200-8.500 8.300 8.500"/></svg><span>Drag and drop gambar</span></div>
              </div>
            </div>
          </div>
          <div class="scroll"><i class="up"></i><div class="thumb"></div><i class="dn"></i></div>
        </div>
      </div>
    </div>`;
  }
}
customElements.define("app-root", AppRoot);
